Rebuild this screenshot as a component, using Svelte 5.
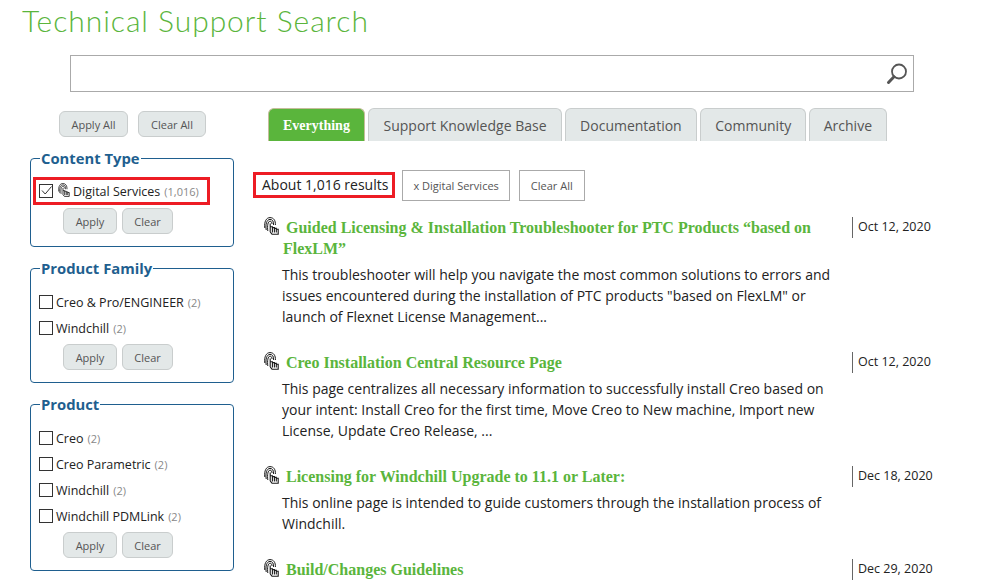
<script>
	const facets = [
		{
			title: 'Content Type',
			items: [{ label: 'Digital Services', count: '1,016', checked: true, icon: true }]
		},
		{
			title: 'Product Family',
			items: [
				{ label: 'Creo & Pro/ENGINEER', count: '2' },
				{ label: 'Windchill', count: '2' }
			]
		},
		{
			title: 'Product',
			items: [
				{ label: 'Creo', count: '2' },
				{ label: 'Creo Parametric', count: '2' },
				{ label: 'Windchill', count: '2' },
				{ label: 'Windchill PDMLink', count: '2' }
			]
		}
	];

	const tabs = ['Everything', 'Support Knowledge Base', 'Documentation', 'Community', 'Archive'];

	const results = [
		{
			title: 'Guided Licensing & Installation Troubleshooter for PTC Products “based on FlexLM”',
			date: 'Oct 12, 2020',
			text: 'This troubleshooter will help you navigate the most common solutions to errors and issues encountered during the installation of PTC products "based on FlexLM" or launch of Flexnet License Management...'
		},
		{
			title: 'Creo Installation Central Resource Page',
			date: 'Oct 12, 2020',
			text: 'This page centralizes all necessary information to successfully install Creo based on your intent: Install Creo for the first time, Move Creo to New machine, Import new License, Update Creo Release, ...'
		},
		{
			title: 'Licensing for Windchill Upgrade to 11.1 or Later:',
			date: 'Dec 18, 2020',
			text: 'This online page is intended to guide customers through the installation process of Windchill.'
		},
		{ title: 'Build/Changes Guidelines', date: 'Dec 29, 2020', text: '' }
	];
</script>

{#snippet print(w, h)}
	<svg class="print" width={w} height={h} viewBox="0 0 15 18" fill="none" stroke="#1a1a1a" stroke-width="1">
		<path d="M0.8 11 C0 4.5 2.4 0.6 6 0.6 C9.8 0.6 11.6 3.6 11.4 8" />
		<path d="M2.2 13 C1.4 7.5 2.6 2.4 6 2.4 C8.6 2.4 9.8 4.6 9.6 8" />
		<path d="M3.8 14 C3.2 9 3.8 4.2 6 4.2 C7.4 4.2 8 5.2 8 7" />
		<path d="M6.2 15 V6.4 M8.4 15.5 V9.8 H6.2 M10.4 15.5 V10.6 H8.4 M12.3 15.5 V11.4 H10.4 M14.2 15.5 V12.2 H12.3 M6.2 15 L8 17.2 H14.2 V15.5" stroke-width="1.1" />
	</svg>
{/snippet}

<h1>Technical Support Search</h1>

<div class="search">
	<input type="text" aria-label="Search" />
	<svg width="24" height="24" viewBox="0 0 24 24" fill="none" stroke="#555">
		<circle cx="14" cy="9.5" r="7" stroke-width="1.8" />
		<path d="M9 14.8 L3.5 20.5" stroke-width="3" stroke-linecap="round" />
	</svg>
</div>

<div class="columns">
	<aside>
		<div class="all-actions">
			<button>Apply All</button>
			<button>Clear All</button>
		</div>
		{#each facets as facet}
			<fieldset>
				<legend>{facet.title}</legend>
				<div class="options">
					{#each facet.items as item}
						<label class:marked={item.checked}>
							<span class="box" class:checked={item.checked}>
								{#if item.checked}
									<svg width="13" height="13" viewBox="0 0 13 13" fill="none" stroke="#333" stroke-width="1">
										<path d="M2 6.5 L5.2 10 L11.5 2.5" />
									</svg>
								{/if}
							</span>
							{#if item.icon}{@render print(12, 14)}{/if}
							<span class="name">{item.label}</span>
							<span class="count">({item.count})</span>
						</label>
					{/each}
				</div>
				<div class="facet-actions">
					<button>Apply</button>
					<button>Clear</button>
				</div>
			</fieldset>
		{/each}
	</aside>

	<main>
		<nav>
			{#each tabs as tab, i}
				<div class="tab" class:active={i === 0}>{tab}</div>
			{/each}
		</nav>

		<div class="summary">
			<div class="total">About 1,016 results</div>
			<div class="chip">x Digital Services</div>
			<div class="chip">Clear All</div>
		</div>

		{#each results as result}
			<article>
				<div class="body">
					<h2>{@render print(15, 18)}<a href="#top">{result.title}</a></h2>
					{#if result.text}<p>{result.text}</p>{/if}
				</div>
				<div class="date">{result.date}</div>
			</article>
		{/each}
	</main>
</div>

<style>
	:global(body) {
		margin: 0;
		background: #fff;
		font-family: 'Open Sans', sans-serif;
		color: #222;
		overflow: hidden;
	}

	h1 {
		margin: 0;
		padding: 2px 0 0 22px;
		height: 55px;
		box-sizing: border-box;
		font-family: Lato, sans-serif;
		font-weight: 300;
		font-size: 30px;
		line-height: 36px;
		letter-spacing: 0.95px;
		color: #5ab53c;
	}

	.search {
		margin-left: 70px;
		width: 844px;
		height: 37px;
		box-sizing: border-box;
		border: 1px solid #aaa;
		display: flex;
		align-items: center;
	}

	.search input {
		flex: 1;
		min-width: 0;
		border: 0;
		outline: 0;
		height: 100%;
		padding: 0;
		background: none;
	}

	.search svg {
		margin-right: 4px;
	}

	.columns {
		display: flex;
		padding: 16px 0 0 30px;
	}

	aside {
		width: 204px;
		flex: none;
	}

	button {
		font-family: 'Open Sans', sans-serif;
		font-size: 11px;
		color: #555;
		background: #e3e8e8;
		border: 1px solid #c9cdcd;
		border-radius: 6px;
		padding: 0;
		height: 26px;
	}

	.all-actions {
		display: flex;
		gap: 10px;
		margin: 3px 0 0 29px;
	}

	.all-actions button:first-child {
		width: 69px;
	}

	.all-actions button:last-child {
		width: 68px;
	}

	fieldset {
		margin: 11px 0 0;
		padding: 0 0 12px;
		border: 1px solid #1f5f8f;
		border-radius: 4px;
		min-width: 0;
	}

	fieldset + fieldset {
		margin-top: 11px;
	}

	legend {
		margin-left: 9px;
		padding: 0 1px;
		font-size: 14.8px;
		font-weight: 700;
		line-height: 20px;
		color: #1f5f8f;
	}

	.options {
		padding: 11px 2px 0;
		display: flex;
		flex-direction: column;
	}

	label {
		display: flex;
		align-items: center;
		height: 26px;
		padding-left: 6px;
		font-size: 12.5px;
		color: #222;
		white-space: nowrap;
	}

	label.marked {
		height: 22px;
		width: 168px;
		border: 3px solid #ed1c24;
		margin-top: -2px;
		padding-left: 3px;
	}

	.box {
		width: 12px;
		height: 12px;
		border: 1px solid #333;
		margin-right: 3px;
		flex: none;
		position: relative;
	}

	.box svg {
		position: absolute;
		left: 0;
		top: -1px;
	}

	label .print {
		margin: 0 3px 3px 2px;
	}

	.name {
		margin-right: 4px;
	}

	.count {
		font-size: 11px;
		color: #888;
	}

	.facet-actions {
		display: flex;
		gap: 5px;
		margin-top: 3px;
		padding-left: 32px;
	}

	.facet-actions button:first-child {
		width: 54px;
	}

	.facet-actions button:last-child {
		width: 51px;
	}

	main {
		margin-left: 19px;
		width: 720px;
		flex: none;
	}

	nav {
		display: flex;
		gap: 3.6px;
		padding-left: 15px;
		height: 33px;
	}

	.tab {
		box-sizing: border-box;
		padding: 0 14px;
		height: 33px;
		line-height: 33px;
		font-size: 14px;
		color: #555;
		background: #e3e8e8;
		border: 1px solid #c9cdcd;
		border-bottom: 0;
		border-radius: 6px 6px 0 0;
	}

	.tab:last-child {
		margin-left: -1px;
	}

	.tab.active {
		background: #5ab53c;
		border-color: #c5bd9b;
		color: #fff;
		font-family: 'Liberation Serif', serif;
		font-weight: 700;
		font-size: 14px;
	}

	.summary {
		display: flex;
		align-items: center;
		margin-top: 29px;
		height: 31px;
	}

	.total {
		box-sizing: border-box;
		border: 3px solid #ed1c24;
		height: 26px;
		line-height: 19px;
		padding: 0 4px 0 6px;
		font-size: 14px;
		color: #222;
		margin-right: 7px;
		margin-bottom: 2px;
	}

	.chip {
		box-sizing: border-box;
		height: 31px;
		line-height: 29px;
		padding: 0 10px;
		border: 1px solid #aaa;
		font-size: 11px;
		color: #555;
	}

	.chip + .chip {
		margin-left: 9px;
		padding: 0 11px;
	}

	article {
		display: flex;
		gap: 12px;
		padding-left: 11px;
		margin-top: 16px;
		margin-bottom: 25px;
	}

	article + article {
		margin-top: 0;
	}

	.body {
		width: 576px;
		flex: none;
	}

	h2 {
		margin: 0;
		padding-left: 19px;
		font-family: 'Liberation Serif', serif;
		font-weight: 700;
		font-size: 16px;
		line-height: 21px;
	}

	h2 .print {
		margin: -4px 7px -4px -19px;
		vertical-align: 2px;
	}

	h2 a {
		color: #5ab53c;
		text-decoration: none;
	}

	p {
		margin: 5px 0 0 18px;
		font-size: 14px;
		line-height: 21px;
		color: #222;
	}

	.date {
		box-sizing: border-box;
		width: 98px;
		height: 21px;
		flex: none;
		padding-left: 5px;
		border-left: 1px solid #666;
		font-size: 12.5px;
		line-height: 20px;
		color: #222;
	}
</style>
